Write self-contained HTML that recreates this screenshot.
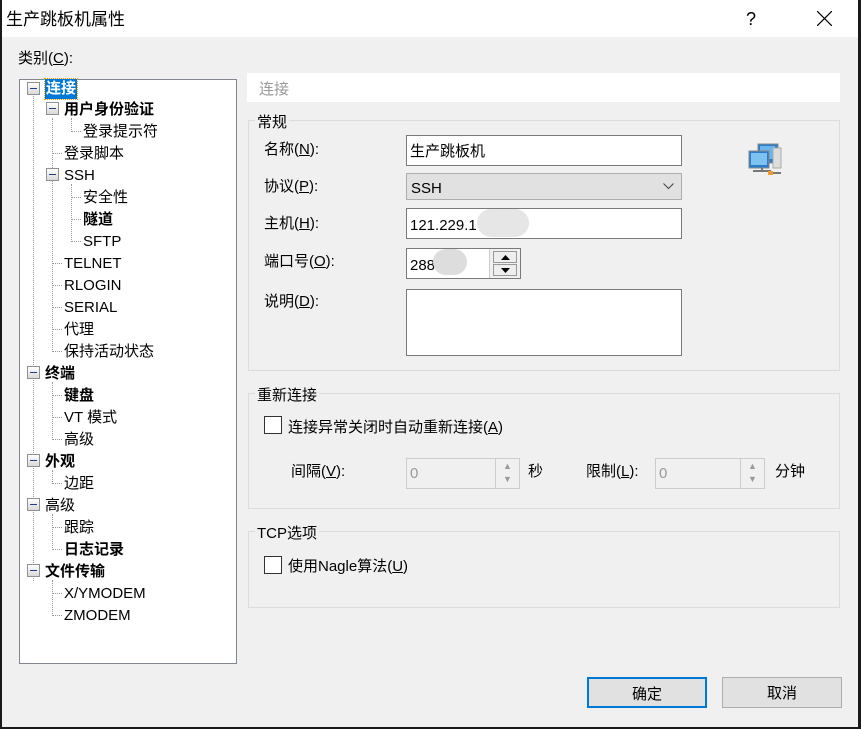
<!DOCTYPE html>
<html><head><meta charset="utf-8"><style>
*{margin:0;padding:0;box-sizing:border-box}
body{width:861px;height:729px;background:#1a1a1a;position:relative;overflow:hidden;font-family:"Liberation Sans","Microsoft YaHei","Noto Sans CJK SC",sans-serif;font-size:15px;color:#000}
.win{position:absolute;left:2px;top:0;width:856px;height:727px;background:#f0f0f0}
.title{position:absolute;left:0;top:0;width:856px;height:37px;background:#fff}
.a{position:absolute;white-space:nowrap;line-height:20px;transform:translateY(2px)}
.b{font-weight:bold}
.tree{position:absolute;left:17px;top:79px;width:218px;height:585px;background:#fff;border:1px solid #828790}
.box{position:absolute;width:13px;height:13px;border:1px solid #919191;background:linear-gradient(#fff,#d8d8d8)}
.box::after{content:"";position:absolute;left:2px;top:5px;width:7px;height:1px;background:#1e3e8a}
.vl{position:absolute;border-left:1px dotted #999;width:0}
.hl{position:absolute;border-top:1px dotted #999;height:0}
.inp{position:absolute;background:#fff;border:1px solid #7a7a7a}
.grp{position:absolute;border:1px solid #dcdcdc}
.gt{position:absolute;background:#f0f0f0;padding:0 2px;line-height:18px;transform:translateY(2px)}
.cb{position:absolute;width:18px;height:18px;border:1px solid #333;background:#fff}
.btn{position:absolute;height:31px;background:#e1e1e1;border:1px solid #adadad;text-align:center;line-height:29px}
u{text-decoration:underline}
.dis{position:absolute;background:#f0f0f0;border:1px solid #ccc;color:#999;padding-left:3px;line-height:30px}
</style></head><body>
<div class="win">
<div class="title"><div class="a" style="left:4px;top:7px;font-size:17px;line-height:22px">生产跳板机属性</div>
<div class="a" style="left:744px;top:7px;font-size:18px">?</div>
<svg style="position:absolute;left:815px;top:11px" width="15" height="15"><path d="M0 0L15 15M15 0L0 15" stroke="#000" stroke-width="1.2"/></svg></div>
<div class="a" style="left:16px;top:47px">类别(<u>C</u>):</div>
<div class="tree">
<div class="vl" style="left:13px;top:16px;height:485px"></div>
<div class="vl" style="left:32px;top:38px;height:232px"></div>
<div class="vl" style="left:51px;top:38px;height:14px"></div>
<div class="vl" style="left:51px;top:104px;height:58px"></div>
<div class="vl" style="left:32px;top:302px;height:58px"></div>
<div class="vl" style="left:32px;top:390px;height:14px"></div>
<div class="vl" style="left:32px;top:434px;height:36px"></div>
<div class="vl" style="left:32px;top:500px;height:36px"></div>
<div class="box" style="left:7px;top:2px"></div>
<div class="a" style="left:25px;top:-3px;background:#0078d7;color:#fff;font-weight:bold;outline:1px dotted #f90;padding:0 1px">连接</div>
<div class="box" style="left:26px;top:22px"></div><div class="a b" style="left:44px;top:18px">用户身份验证</div>
<div class="hl" style="left:51px;top:51px;width:10px"></div><div class="a" style="left:63px;top:40px">登录提示符</div>
<div class="hl" style="left:32px;top:73px;width:10px"></div><div class="a" style="left:44px;top:62px">登录脚本</div>
<div class="box" style="left:26px;top:88px"></div><div class="a" style="left:44px;top:84px">SSH</div>
<div class="hl" style="left:51px;top:117px;width:10px"></div><div class="a" style="left:63px;top:106px">安全性</div>
<div class="hl" style="left:51px;top:139px;width:10px"></div><div class="a b" style="left:63px;top:128px">隧道</div>
<div class="hl" style="left:51px;top:161px;width:10px"></div><div class="a" style="left:63px;top:150px">SFTP</div>
<div class="hl" style="left:32px;top:183px;width:10px"></div><div class="a" style="left:44px;top:172px">TELNET</div>
<div class="hl" style="left:32px;top:205px;width:10px"></div><div class="a" style="left:44px;top:194px">RLOGIN</div>
<div class="hl" style="left:32px;top:227px;width:10px"></div><div class="a" style="left:44px;top:216px">SERIAL</div>
<div class="hl" style="left:32px;top:249px;width:10px"></div><div class="a" style="left:44px;top:238px">代理</div>
<div class="hl" style="left:32px;top:271px;width:10px"></div><div class="a" style="left:44px;top:260px">保持活动状态</div>
<div class="box" style="left:7px;top:286px"></div><div class="a b" style="left:25px;top:282px">终端</div>
<div class="hl" style="left:32px;top:315px;width:10px"></div><div class="a b" style="left:44px;top:304px">键盘</div>
<div class="hl" style="left:32px;top:337px;width:10px"></div><div class="a" style="left:44px;top:326px">VT 模式</div>
<div class="hl" style="left:32px;top:359px;width:10px"></div><div class="a" style="left:44px;top:348px">高级</div>
<div class="box" style="left:7px;top:374px"></div><div class="a b" style="left:25px;top:370px">外观</div>
<div class="hl" style="left:32px;top:403px;width:10px"></div><div class="a" style="left:44px;top:392px">边距</div>
<div class="box" style="left:7px;top:418px"></div><div class="a" style="left:25px;top:414px">高级</div>
<div class="hl" style="left:32px;top:447px;width:10px"></div><div class="a" style="left:44px;top:436px">跟踪</div>
<div class="hl" style="left:32px;top:469px;width:10px"></div><div class="a b" style="left:44px;top:458px">日志记录</div>
<div class="box" style="left:7px;top:484px"></div><div class="a b" style="left:25px;top:480px">文件传输</div>
<div class="hl" style="left:32px;top:513px;width:10px"></div><div class="a" style="left:44px;top:502px">X/YMODEM</div>
<div class="hl" style="left:32px;top:535px;width:10px"></div><div class="a" style="left:44px;top:524px">ZMODEM</div>
</div>
<div style="position:absolute;left:245px;top:73px;width:593px;height:29px;background:#fff"></div>
<div class="a" style="left:257px;top:78px;color:#999">连接</div>
<div class="grp" style="left:246px;top:120px;width:592px;height:251px"></div>
<div class="gt" style="left:253px;top:112px">常规</div>
<div class="a" style="left:262px;top:138px">名称(<u>N</u>):</div>
<div class="inp" style="left:404px;top:135px;width:276px;height:31px"><div class="a" style="left:3px;top:4px">生产跳板机</div></div>
<div class="a" style="left:262px;top:175px">协议(<u>P</u>):</div>
<div class="inp" style="left:404px;top:173px;width:276px;height:27px;background:#e1e1e1;border-color:#adadad"><div class="a" style="left:4px;top:3px">SSH</div>
<svg style="position:absolute;left:256px;top:9px" width="11" height="7"><path d="M0.5 0.5L5.5 5.5L10.5 0.5" stroke="#444" fill="none"/></svg></div>
<div class="a" style="left:262px;top:212px">主机(<u>H</u>):</div>
<div class="inp" style="left:404px;top:208px;width:276px;height:31px"><div class="a" style="left:3px;top:5px">121.229.1</div>
<div style="position:absolute;left:70px;top:0;width:52px;height:28px;background:#e6e6e6;border-radius:14px"></div></div>
<div class="a" style="left:262px;top:250px">端口号(<u>O</u>):</div>
<div class="inp" style="left:404px;top:248px;width:115px;height:31px"><div class="a" style="left:3px;top:5px">288</div>
<div style="position:absolute;left:26px;top:0;width:34px;height:26px;background:#ddd;border-radius:13px"></div>
<div style="position:absolute;left:82px;top:0;width:31px;height:29px;background:#f0f0f0;border-left:1px solid #ccc">
<div style="position:absolute;left:3px;top:2px;width:24px;height:12px;border:1px solid #999;background:#eee"><svg style="position:absolute;left:7px;top:3px" width="9" height="5"><path d="M0 5L4.5 0L9 5Z"/></svg></div>
<div style="position:absolute;left:3px;top:15px;width:24px;height:12px;border:1px solid #999;background:#eee"><svg style="position:absolute;left:7px;top:3px" width="9" height="5"><path d="M0 0L4.5 5L9 0Z"/></svg></div></div></div>
<div class="a" style="left:262px;top:290px">说明(<u>D</u>):</div>
<div class="inp" style="left:404px;top:289px;width:276px;height:67px"></div>
<svg style="position:absolute;left:746px;top:143px" width="34" height="33">
<rect x="10" y="1" width="20" height="19" fill="#2a7cc7" stroke="#888"/><rect x="12" y="3" width="15" height="13" fill="#6bb4ee"/>
<rect x="25" y="5" width="8" height="20" fill="#ddd" stroke="#aaa"/>
<rect x="1" y="8" width="20" height="17" fill="#2a7cc7" stroke="#888"/><rect x="3" y="10" width="16" height="12" fill="#7ec2f2"/>
<path d="M5 28h18M14 25v3M22 30h11" stroke="#777" stroke-width="2" fill="none"/><rect x="20" y="28" width="5" height="4" fill="#f29a2e"/></svg>
<div class="grp" style="left:246px;top:393px;width:592px;height:116px"></div>
<div class="gt" style="left:253px;top:385px">重新连接</div>
<div class="cb" style="left:262px;top:416px"></div>
<div class="a" style="left:286px;top:416px">连接异常关闭时自动重新连接(<u>A</u>)</div>
<div class="a" style="left:289px;top:460px">间隔(<u>V</u>):</div>
<div class="dis" style="left:404px;top:458px;width:114px;height:31px">0
<div style="position:absolute;right:0;top:0;width:24px;height:29px;border-left:1px solid #ccc;color:#999;font-size:9px;line-height:13px;text-align:center;padding-top:1px">▲<br>▼</div></div>
<div class="a" style="left:526px;top:460px">秒</div>
<div class="a" style="left:584px;top:460px">限制(<u>L</u>):</div>
<div class="dis" style="left:653px;top:458px;width:110px;height:31px">0
<div style="position:absolute;right:0;top:0;width:24px;height:29px;border-left:1px solid #ccc;color:#999;font-size:9px;line-height:13px;text-align:center;padding-top:1px">▲<br>▼</div></div>
<div class="a" style="left:773px;top:460px">分钟</div>
<div class="grp" style="left:246px;top:531px;width:592px;height:77px"></div>
<div class="gt" style="left:253px;top:523px">TCP选项</div>
<div class="cb" style="left:262px;top:556px"></div>
<div class="a" style="left:286px;top:555px">使用Nagle算法(<u>U</u>)</div>
<div class="btn" style="left:585px;top:677px;width:120px;border:2px solid #0078d7;padding-top:1px">确定</div>
<div class="btn" style="left:720px;top:677px;width:120px;padding-top:1px">取消</div>
</div>
</body></html>
